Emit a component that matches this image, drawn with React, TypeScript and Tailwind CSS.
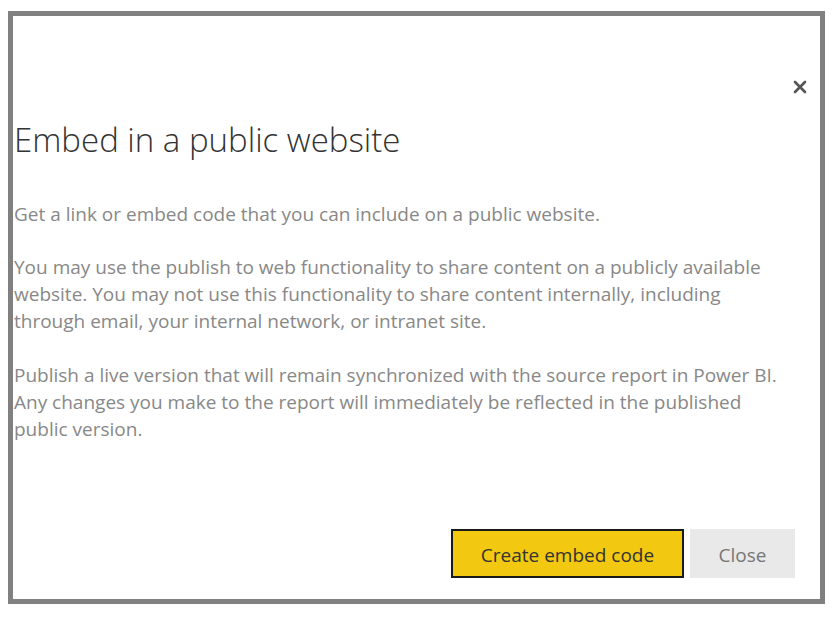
const App = () => {
  return (
    <div className="w-[835px] h-[618px] bg-white pt-[11px] pl-[8px]">
      <div
        className="w-[817px] h-[593px] border-[5px] border-[#808080] bg-white flex flex-col"
        style={{ fontFamily: '"Open Sans", "Noto Sans", sans-serif' }}
      >
        {/* Close icon */}
        <div className="flex justify-end pt-[63px] pr-[12px]">
          <button className="w-[16px] h-[16px] flex items-center justify-center">
            <svg width="14" height="14" viewBox="0 0 14 14">
              <path d="M2 2 L12 12 M12 2 L2 12" stroke="#555555" strokeWidth="2.6" strokeLinecap="round" />
            </svg>
          </button>
        </div>

        {/* Title */}
        <h1 className="mt-[25px] pl-[1px] text-[33px] leading-[40px] font-light text-[#333]">
          Embed in a public website
        </h1>

        {/* Body */}
        <div className="mt-[41px] pl-[1px] pr-[10px] text-[19px] leading-[27px] text-[#888]">
          <p>Get a link or embed code that you can include on a public website.</p>
          <p className="mt-[26px]">
            You may use the publish to web functionality to share content on a publicly available
            <br />
            website. You may not use this functionality to share content internally, including
            <br />
            through email, your internal network, or intranet site.
          </p>
          <p className="mt-[27px]">
            Publish a live version that will remain synchronized with the source report in Power BI.
            <br />
            Any changes you make to the report will immediately be reflected in the published
            <br />
            public version.
          </p>
        </div>

        {/* Actions */}
        <div className="mt-auto mb-[21px] mr-[25px] flex justify-end gap-[6px]">
          <button className="w-[233px] h-[49px] pt-[3px] bg-[#f2c811] border-2 border-[#1a1a1a] text-[19px] text-[#333]">
            Create embed code
          </button>
          <button className="w-[105px] h-[49px] pt-[3px] bg-[#e9e9e9] text-[19px] text-[#777]">
            Close
          </button>
        </div>
      </div>
    </div>
  );
};

export default App;
